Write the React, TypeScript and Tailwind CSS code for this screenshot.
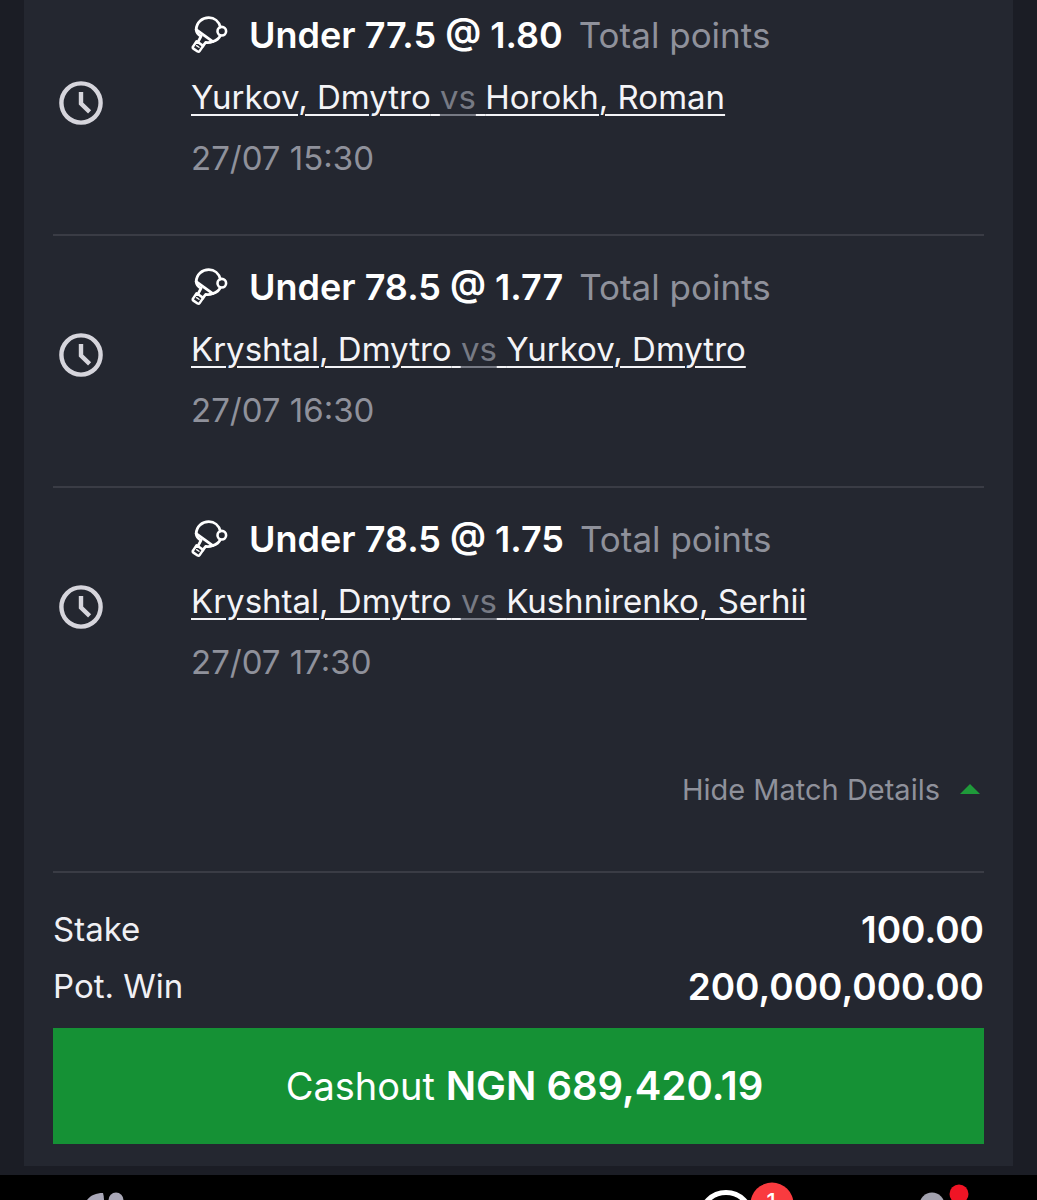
import { useState } from 'react';

const bets = [
  { pick: 'Under 77.5 @ 1.80', market: 'Total points', home: 'Yurkov, Dmytro', away: 'Horokh, Roman', time: '27/07 15:30' },
  { pick: 'Under 78.5 @ 1.77', market: 'Total points', home: 'Kryshtal, Dmytro', away: 'Yurkov, Dmytro', time: '27/07 16:30' },
  { pick: 'Under 78.5 @ 1.75', market: 'Total points', home: 'Kryshtal, Dmytro', away: 'Kushnirenko, Serhii', time: '27/07 17:30' },
];

function ClockIcon() {
  return (
    <svg viewBox="0 0 44 44" className="w-11 h-11" fill="none" stroke="#d6d5dc" strokeWidth="4.4" aria-hidden="true">
      <circle cx="22" cy="22" r="19.6" />
      <path d="M22 11V22.500l8.600 8.300" />
    </svg>
  );
}

function PaddleIcon() {
  return (
    <svg viewBox="0 0 38 38" className="w-[38px] h-[38px] shrink-0" fill="none" stroke="#fff" strokeWidth="2.8" strokeLinejoin="round" strokeLinecap="round" aria-hidden="true">
      <path d="M29.300 11C27.800 5.400 23.500 1.700 17.800 1.700 11 1.700 5.400 6.600 5.200 13.600L21.800 25.600C25.600 24.500 28.200 22.500 29.300 19.600" />
      <path d="M5.200 13.600c.2 2.900 1.600 5 4.900 6.600L7.200 25.600M21.800 25.600c-2.200 1-4.600 1.300-7.200.9L11.800 30.200" />
      <path d="M5.600 25.300l6.600 4.600-3.600 5.200c-.5.700-1.300.8-2 .4l-4.200-2.900c-.8-.5-.9-1.300-.4-2z" strokeWidth="2.500" />
      <path d="M5.600 29.600l2.400 1.700" strokeWidth="1.300" />
      <circle cx="30.800" cy="15.200" r="4.300" strokeWidth="2.600" />
    </svg>
  );
}

function BetRow({ bet }: { bet: (typeof bets)[number] }) {
  return (
    <li className="flex pt-5 pb-[46px] border-b-2 border-[#3a3c45] first:pt-1 last:border-b-0 last:pb-0">
      <div className="w-[138px] shrink-0 pl-[6px] pt-[77px]">
        <ClockIcon />
      </div>
      <div className="min-w-0">
        <div className="flex items-center leading-[62px]">
          <PaddleIcon />
          <span className="ml-5 text-[36px] font-semibold text-white">{bet.pick}</span>
          <span className="ml-4 text-[35px] text-[#8f919b]">{bet.market}</span>
        </div>
        <a href="#match" className="block text-[33px] leading-[62px] text-[#f4f4f7] underline decoration-2 underline-offset-[5px]">
          {bet.home} <span className="text-[#777a84] underline decoration-2 underline-offset-[5px]">vs</span> {bet.away}
        </a>
        <div className="text-[33px] leading-[60px] text-[#8f919b]">{bet.time}</div>
      </div>
    </li>
  );
}

function BottomNav() {
  return (
    <nav className="h-[25px] bg-black overflow-hidden">
      <svg viewBox="0 0 1037 25" className="w-full h-[25px]" aria-hidden="true">
        <path d="M87 25C91 20 96 18 103 18q1 3 1 7z" fill="#aaa8b8" />
        <circle cx="116" cy="25" r="7.500" fill="#aaa8b8" />
        <circle cx="726" cy="43" r="25.500" fill="none" stroke="#fff" strokeWidth="5" />
        <circle cx="772" cy="29" r="21.500" fill="#f93b3f" />
        <text x="771" y="34" textAnchor="middle" fontSize="22" fontWeight="500" fill="#fff" fontFamily="Inter, sans-serif">1</text>
        <circle cx="932" cy="30" r="12.500" fill="#a3a2af" />
        <circle cx="959" cy="19" r="9.500" fill="#f01425" />
      </svg>
    </nav>
  );
}

export default function App() {
  const [open, setOpen] = useState(true);

  return (
    <div className="bg-[#1b1d25] font-[Inter,sans-serif]">
      <main className="px-6 pb-[9px]">
        <section className="bg-[#242730] px-[29px] pb-[22px]">
          {/* Selections */}
          {open && (
            <ul>
              {bets.map((bet) => (
                <BetRow key={bet.time} bet={bet} />
              ))}
            </ul>
          )}

          <div className="flex justify-end pt-[73px] pb-[56px] pr-1 border-b-2 border-[#3a3c45]">
            <button
              type="button"
              onClick={() => setOpen(!open)}
              className="flex items-center gap-5 text-[29px] leading-[50px] text-[#8f919b]"
            >
              Hide Match Details
              <svg viewBox="0 0 20 12" className="w-5 h-3" aria-hidden="true">
                <path d="M0 10L10 0l10 10z" fill="#1f9a3a" />
              </svg>
            </button>
          </div>

          {/* Totals */}
          <dl className="pt-7 pb-[13px]">
            <div className="flex items-center justify-between leading-[57px]">
              <dt className="text-[33px] text-[#f0f0f4]">Stake</dt>
              <dd className="text-[37px] font-semibold text-white">100.00</dd>
            </div>
            <div className="flex items-center justify-between leading-[57px]">
              <dt className="text-[33px] text-[#f0f0f4]">Pot. Win</dt>
              <dd className="text-[37px] font-semibold text-white">200,000,000.00</dd>
            </div>
          </dl>

          <button type="button" className="block w-full h-[116px] pl-3 bg-[#159135] text-[38px] text-white">
            Cashout <span className="text-[40px] font-semibold">NGN 689,420.19</span>
          </button>
        </section>
      </main>
      <BottomNav />
    </div>
  );
}
